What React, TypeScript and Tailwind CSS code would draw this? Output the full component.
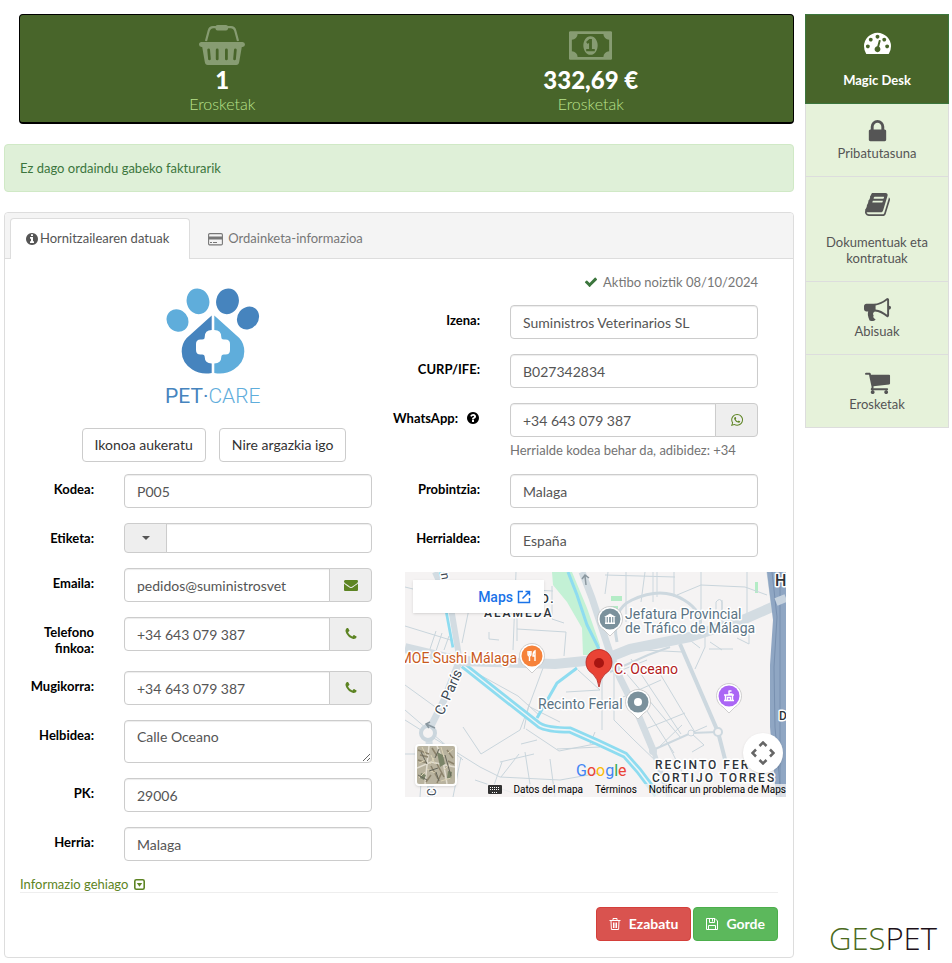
import type { ReactNode } from 'react';
import clsx from 'clsx';

const icons = {
  lock: 'M640 768h512v-192q0-106-75-181t-181-75-181 75-75 181v192zm832 96v576q0 40-28 68t-68 28h-960q-40 0-68-28t-28-68v-576q0-40 28-68t68-28h32v-192q0-184 132-316t316-132 316 132 132 316v192h32q40 0 68 28t28 68z',
  book: 'M1703 478q40 57 18 129l-275 906q-19 64-76.5 107.5t-122.5 43.5h-923q-77 0-148.5-53.5t-99.5-131.5q-24-67-2-127 0-4 3-27t4-37q1-8-3-21.5t-3-19.5q2-11 8-21t16.5-23.5 16.5-23.5q23-38 45-91.5t30-91.5q3-10 .5-30t-.5-28q3-11 17-28t17-23q21-36 42-92t25-90q1-9-2.5-32t.5-28q4-13 22-30.5t22-22.5q19-26 42.5-84.5t27.5-96.5q1-8-3-25.5t-2-26.5q2-8 9-18t18-23 17-21q8-12 16.5-30.5t15-35 16-36 19.5-32 26.5-23.5 36-11.5 47.5 5.5l-1 3q38-9 51-9h761q74 0 114 56t18 130l-274 906q-36 119-71.5 153.5t-128.5 34.5h-869q-27 0-38 15-11 16-1 43 24 70 144 70h923q29 0 56-15.5t35-41.5l300-987q7-22 5-57 38 15 59 43zm-1064 2q-4 13 2 22.5t20 9.5h608q13 0 25.5-9.5t16.5-22.5l21-64q4-13-2-22.5t-20-9.5h-608q-13 0-25.5 9.5t-16.5 22.5zm-83 256q-4 13 2 22.5t20 9.5h608q13 0 25.5-9.5t16.5-22.5l21-64q4-13-2-22.5t-20-9.5h-608q-13 0-25.5 9.5t-16.5 22.5z',
  bullhorn: 'M1664 640q53 0 90.5 37.5t37.5 90.5-37.5 90.5-90.5 37.5v384q0 52-38 90t-90 38q-417-347-812-380-58 19-91 66t-31 100.5 40 92.5q-20 33-23 65.5t6 58 33.5 55 48 50 61.5 50.5q-29 58-111.5 83t-168.5 11.5-132-55.5q-7-23-29.5-87.5t-32-94.5-23-89-15-101 3.5-98.5 22-110.5h-122q-66 0-113-47t-47-113v-192q0-66 47-113t113-47h480q435 0 896-384 52 0 90 38t38 90v384zm-128 604v-954q-394 302-768 343v270q377 42 768 341z',
  cart: 'M704 1536q0 52-38 90t-90 38-90-38-38-90 38-90 90-38 90 38 38 90zm896 0q0 52-38 90t-90 38-90-38-38-90 38-90 90-38 90 38 38 90zm128-1088v512q0 24-16.5 42.5t-40.5 21.5l-1044 122q13 60 13 70 0 16-24 64h920q26 0 45 19t19 45-19 45-45 19h-1024q-26 0-45-19t-19-45q0-11 8-31.5t16-36 21.5-40 15.5-29.5l-177-823h-204q-26 0-45-19t-19-45 19-45 45-19h256q16 0 28.5 6.5t19.5 15.5 13 24.5 8 26 5.5 29.5 4.5 26h1201q26 0 45 19t19 45z',
  envelope: 'M1792 710v794q0 66-47 113t-113 47h-1472q-66 0-113-47t-47-113v-794q44 49 101 87 362 246 497 345 57 42 92.5 65.5t94.5 48 110 24.5h2q51 0 110-24.5t94.5-48 92.5-65.5q170-123 498-345 57-39 100-87zm0-294q0 79-49 151t-122 123q-376 261-468 325-10 7-42.5 31t-54 38.5-52 32.5-57.5 27-50 9h-2q-23 0-50-9t-57.5-27-52-32.5-54-38.5-42.5-31q-91-64-262-182.5t-205-142.5q-62-42-117-115.5t-55-136.5q0-78 41.5-130t118.5-52h1472q65 0 112.5 47t47.5 113z',
  phone: 'M1600 1240q0 27-10 70.5t-21 68.5q-21 50-122 106-94 51-186 51-27 0-53-3.5t-57.5-12.5-47-14.5-55.5-20.5-49-18q-98-35-175-83-127-79-264-216t-216-264q-48-77-83-175-3-9-18-49t-20.5-55.5-14.5-47-12.5-57.5-3.5-53q0-92 51-186 56-101 106-122 25-11 68.5-21t70.5-10q14 0 21 3 18 6 53 76 11 19 30 54t35 63.5 31 53.5q3 4 17.5 25t21.5 35.5 7 28.5q0 20-28.5 50t-62 55-62 53-28.5 46q0 9 5 22.5t8.5 20.5 14 24 11.5 19q76 137 174 235t235 174q2 1 19 11.5t24 14 20.5 8.5 22.5 5q18 0 46-28.5t53-62 55-62 50-28.5q14 0 28.5 7t35.5 21.5 25 17.5q25 15 53.5 31t63.5 35 54 30q70 35 76 53 3 7 3 21z',
  whatsapp: 'M1113 974q13 0 97.5 44t89.5 53q2 5 2 15 0 33-17 76-16 39-71 65.5t-102 26.5q-57 0-190-62-98-45-170-118t-148-185q-72-107-71-194v-8q3-91 74-158 24-22 52-22 6 0 18 1.5t19 1.5q19 0 26.5 6.5t15.5 27.5q8 20 33 88t25 75q0 21-34.5 57.5t-34.5 46.5q0 7 5 15 34 73 102 137 56 53 151 101 12 7 22 7 15 0 54-48.5t52-48.5zm-203 530q127 0 243.5-50t200.5-134 134-200.5 50-243.5-50-243.5-134-200.5-200.5-134-243.5-50-243.5 50-200.5 134-134 200.5-50 243.5q0 203 120 368l-79 233 242-77q158 104 345 104zm0-1382q153 0 292.5 60t240.5 161 161 240.5 60 292.5-60 292.5-161 240.5-240.5 161-292.5 60q-195 0-365-94l-417 134 136-405q-108-178-108-389 0-153 60-292.5t161-240.5 240.5-161 292.5-60z',
  dashboard: 'M384 1152q0-53-37.5-90.5t-90.5-37.5-90.5 37.5-37.5 90.5 37.5 90.5 90.5 37.5 90.5-37.5 37.5-90.5zm192-448q0-53-37.5-90.5t-90.5-37.5-90.5 37.5-37.5 90.5 37.5 90.5 90.5 37.5 90.5-37.5 37.5-90.5zm428 481l101-382q6-26-7.5-48.5t-38.5-29.5-48 6.5-30 39.5l-101 382q-60 5-107 43.5t-63 98.5q-20 77 20 146t117 89 146-20 89-117q16-60-6-117t-72-91zm660-33q0-53-37.5-90.5t-90.5-37.5-90.5 37.5-37.5 90.5 37.5 90.5 90.5 37.5 90.5-37.5 37.5-90.5zm-640-640q0-53-37.5-90.5t-90.5-37.5-90.5 37.5-37.5 90.5 37.5 90.5 90.5 37.5 90.5-37.5 37.5-90.5zm448 192q0-53-37.5-90.5t-90.5-37.5-90.5 37.5-37.5 90.5 37.5 90.5 90.5 37.5 90.5-37.5 37.5-90.5zm320 448q0 261-141 483-19 29-54 29h-1402q-35 0-54-29-141-221-141-483 0-182 71-348t191-286 286-191 348-71 348 71 286 191 191 286 71 348z',
  info: 'M1152 1376v-160q0-14-9-23t-23-9h-96v-512q0-14-9-23t-23-9h-320q-14 0-23 9t-9 23v160q0 14 9 23t23 9h96v320h-96q-14 0-23 9t-9 23v160q0 14 9 23t23 9h448q14 0 23-9t9-23zm-128-896v-160q0-14-9-23t-23-9h-192q-14 0-23 9t-9 23v160q0 14 9 23t23 9h192q14 0 23-9t9-23zm640 416q0 209-103 385.5t-279.5 279.5-385.5 103-385.5-103-279.5-279.5-103-385.5 103-385.5 279.5-279.5 385.5-103 385.5 103 279.5 279.5 103 385.5z',
  question: 'M1024 1376v-192q0-14-9-23t-23-9h-192q-14 0-23 9t-9 23v192q0 14 9 23t23 9h192q14 0 23-9t9-23zm256-672q0-88-55.5-163t-138.5-116-170-41q-243 0-371 213-15 24 8 42l132 100q7 6 19 6 16 0 25-12 53-68 86-92 34-24 86-24 48 0 85.5 26t37.5 59q0 38-20 61t-68 45q-63 28-115.5 86.5t-52.5 125.5v36q0 14 9 23t23 9h192q14 0 23-9t9-23q0-19 21.5-49.5t54.5-49.5q32-18 49-28.5t46-35 44.5-48 28-60.5 12.5-81zm384 192q0 209-103 385.5t-279.5 279.5-385.5 103-385.5-103-279.5-279.5-103-385.5 103-385.5 279.5-279.5 385.5-103 385.5 103 279.5 279.5 103 385.5z',
  check: 'M1671 566q0 40-28 68l-724 724-136 136q-28 28-68 28t-68-28l-136-136-362-362q-28-28-28-68t28-68l136-136q28-28 68-28t68 28l294 295 656-657q28-28 68-28t68 28l136 136q28 28 28 68z',
};

type IconName = keyof typeof icons;

function Icon({ name, className }: { name: IconName; className?: string }) {
  return (
    <svg viewBox="0 0 1792 1792" fill="currentColor" className={clsx('shrink-0', className)} aria-hidden="true">
      <path d={icons[name]} />
    </svg>
  );
}

function BasketIcon() {
  return (
    <svg viewBox="0 0 46 42" className="h-[42px] w-[46px]" fill="currentColor" aria-hidden="true">
      <path d="M7 17 9.800 6.500Q10.800 3.200 14 3.200h18Q35.200 3.200 36.200 6.500L39 17" fill="none" stroke="currentColor" strokeWidth="2.200" />
      <rect x="16.500" y="1" width="12.500" height="5.500" rx="2" />
      <path
        fillRule="evenodd"
        d="M2.500 18h41a2.500 2.500 0 0 1 0 5h-.7l-2.600 15q-.4 3-3 3H8.800q-2.600 0-3-3L3.200 23h-.7a2.500 2.500 0 0 1 0-5zM9.500 24.500a1.300 1.300 0 0 0-1.200 1.500l.8 9a1.300 1.300 0 0 0 2.700 0l-.8-9.200a1.400 1.400 0 0 0-1.500-1.300zM18.200 24.500a1.400 1.400 0 0 0-1.400 1.400v9a1.400 1.400 0 0 0 2.800 0v-9a1.400 1.400 0 0 0-1.400-1.400zM27.400 24.500a1.400 1.400 0 0 0-1.400 1.400v9a1.400 1.400 0 0 0 2.800 0v-9a1.400 1.400 0 0 0-1.400-1.400zM36.500 24.500a1.400 1.400 0 0 0-1.500 1.300l-.8 9.200a1.300 1.300 0 0 0 2.700 0l.8-9a1.300 1.300 0 0 0-1.200-1.500z"
      />
    </svg>
  );
}

function MoneyIcon() {
  return (
    <svg viewBox="0 0 1920 1280" className="h-[29px] w-[43px]" fill="currentColor" aria-hidden="true">
      <path d="M768 896h384v-96h-128v-448h-114l-148 137 77 80q42-37 55-57h2v288h-128v96zm512-256q0 70-21 142t-59.5 134-101.5 101-138 39-138-39-101.5-101-59.500-134-21-142 21-142 59.500-134 101.500-101 138-39 138 39 101.500 101 59.500 134 21 142zm512 256v-512q-106 0-181-75t-75-181h-1152q0 106-75 181t-181 75v512q106 0 181 75t75 181h1152q0-106 75-181t181-75zm128-832v1152q0 26-19 45t-45 19h-1792q-26 0-45-19t-19-45v-1152q0-26 19-45t45-19h1792q26 0 45 19t19 45z" />
    </svg>
  );
}

function CardIcon() {
  return (
    <svg viewBox="0 0 15 13" className="h-[13px] w-[15px]" aria-hidden="true">
      <rect x=".6" y=".6" width="13.800" height="11.300" rx="1.200" fill="none" stroke="currentColor" strokeWidth="1.100" />
      <path d="M.5 3.500h14v3H.5z" fill="currentColor" />
      <path d="M2 9.500h2M5 9.500h4" stroke="currentColor" />
    </svg>
  );
}

function TrashIcon() {
  return (
    <svg viewBox="0 0 12 12" className="size-3" fill="none" stroke="currentColor" aria-hidden="true">
      <path d="M.5 2.500h11M4 2.500v-2h4v2M2 2.500l.4 9h7.200l.4-9M4.500 4.500v5.500M6 4.500v5.500M7.500 4.500v5.500" />
    </svg>
  );
}

function SaveIcon() {
  return (
    <svg viewBox="0 0 12 12" className="size-3" fill="none" stroke="currentColor" aria-hidden="true">
      <path d="M.5.5h8.500l2.500 2.500v8.500H.5zM3.500.5v4h5v-4M6.500 1v2.500M2.500 11.500v-4h7v4" />
    </svg>
  );
}

function PetCareLogo() {
  return (
    <svg viewBox="0 0 100 120" className="h-[120px] w-[100px]" role="img" aria-label="Pet Care">
      <g fill="#5faddb">
        <ellipse cx="13.500" cy="33.500" rx="10.500" ry="11.700" transform="rotate(-38 13.500 33.500)" />
        <ellipse cx="34" cy="14.300" rx="11.300" ry="13" transform="rotate(-15 34 14.300)" />
        <path d="M50.300 28.500V43q7 0 7 7 0 2.500 2.500 2.500h1.700q4.500 0 4.500 4.500v6q0 4.500-4.500 4.500h-1.700q-2.500 0-2.500 2.500 0 6-7 6.500V86q11 2 19.500-3.500 10.500-7 10.500-18 0-8-5-13.500z" />
      </g>
      <g fill="#4684be">
        <ellipse cx="63.500" cy="14.300" rx="11.300" ry="13" transform="rotate(15 63.500 14.300)" />
        <ellipse cx="84" cy="31" rx="10.500" ry="12" transform="rotate(38 84 31)" />
        <path d="M47.700 28.500V43q-7 0-7 7 0 2.500-2.500 2.500h-1.700q-4.500 0-4.500 4.500v6q0 4.500 4.500 4.500h1.700q2.500 0 2.500 2.500 0 6 7 6.500V86q-11 2-19.500-3.500-10.500-7-10.500-18 0-8 5-13.500z" />
      </g>
      <text x="1" y="116" fontFamily="Roboto, sans-serif" fontSize="21" fill="#4684be">
        PET·<tspan fill="#5faddb" fontWeight="300">CARE</tspan>
      </text>
    </svg>
  );
}

const navItems: { label: string; icon: IconName; tall?: boolean }[] = [
  { label: 'Pribatutasuna', icon: 'lock' },
  { label: 'Dokumentuak eta kontratuak', icon: 'book', tall: true },
  { label: 'Abisuak', icon: 'bullhorn' },
  { label: 'Erosketak', icon: 'cart' },
];

function Sidebar() {
  return (
    <aside className="flex w-36 shrink-0 flex-col">
      <nav className="text-center leading-4">
        <a href="#desk" className="flex h-[90px] flex-col items-center border border-[#3c763d] bg-[#48652a] pt-[14px] font-bold text-white">
          <Icon name="dashboard" className="size-[27px]" />
          <span className="mt-4">Magic Desk</span>
        </a>
        {navItems.map((item) => (
          <a
            key={item.label}
            href={`#${item.icon}`}
            className="flex flex-col items-center border-x border-b border-[#ddd] bg-[#e6f2da] px-3 pt-[14px] pb-[15px] text-[#555]"
          >
            <Icon name={item.icon} className="size-[27px]" />
            <span className={clsx(item.tall && 'mt-4')}>{item.label}</span>
          </a>
        ))}
      </nav>
      <div className="mt-auto pr-3 text-right font-['Open_Sans',sans-serif] text-[31px] leading-10 font-light text-[#1c1018]">
        <span className="text-[#4b6a1d]">GES</span>PET
      </div>
    </aside>
  );
}

function Stat({ icon, value }: { icon: ReactNode; value: string }) {
  return (
    <div className="flex flex-1 flex-col items-center">
      <div className="flex h-[42px] items-center text-[#879c72]">{icon}</div>
      <strong className="text-2xl leading-7 font-black text-white">{value}</strong>
      <span className="text-base leading-5 font-light text-[#b9e38a]">Erosketak</span>
    </div>
  );
}

const inputClass =
  'block h-[34px] w-full min-w-0 rounded border border-[#ccc] bg-white px-3 pt-px text-sm text-[#555] shadow-[inset_0_1px_1px_rgba(0,0,0,0.075)] outline-none';

interface FieldProps {
  id: string;
  label: string;
  help?: boolean;
  children: ReactNode;
}

function Field({ id, label, help, children }: FieldProps) {
  return (
    <div className="flex gap-[30px] pr-5">
      <label htmlFor={id} className="flex w-[88px] shrink-0 items-start justify-end pt-[7px] text-right leading-4 font-bold text-black">
        {label}
        {help && <Icon name="question" className="mt-px ml-2 size-[14px]" />}
      </label>
      <div className="min-w-0 flex-1">{children}</div>
    </div>
  );
}

function TextField({ id, label, value }: { id: string; label: string; value: string }) {
  return (
    <Field id={id} label={label}>
      <input id={id} type="text" defaultValue={value} className={inputClass} />
    </Field>
  );
}

function AddonField({ id, label, value, icon, note }: { id: string; label: string; value: string; icon: IconName; note?: string }) {
  return (
    <Field id={id} label={label} help={!!note}>
      <div className="flex">
        <input id={id} type="text" defaultValue={value} className={clsx(inputClass, 'rounded-r-none')} />
        <button type="button" aria-label={label} className="-ml-px flex w-[43px] shrink-0 items-center justify-center rounded-r border border-[#ccc] bg-[#eee] text-[#5d8423]">
          <Icon name={icon} className="size-[14px]" />
        </button>
      </div>
      {note && <p className="mt-[5px] leading-[17px] whitespace-nowrap text-[#737373]">{note}</p>}
    </Field>
  );
}

function Pin({ x, y, color, children }: { x: number; y: number; color: string; children: ReactNode }) {
  return (
    <g transform={`translate(${x} ${y})`}>
      <path d="M0 17-6 11A12.500 12.500 0 1 1 6 11z" fill="#fff" stroke="#bbb" strokeWidth=".7" />
      <circle r="10.500" fill={color} />
      {children}
    </g>
  );
}

function SupplierMap() {
  return (
    <div className="relative -mr-2 ml-[13px] h-[225px] overflow-hidden bg-[#f5f3f3] font-[Roboto,sans-serif]">
      <svg viewBox="0 0 381 225" preserveAspectRatio="xMidYMid slice" className="block size-full" fill="none" role="img" aria-label="Calle Oceano, Malaga">
        <path d="M147 0h20l15 36 13 37-3 10h-14l-1-27-15-26-14-17z" fill="#c3f1d5" />
        <path d="M206 24h11v5h-11zM206 34h7v4h-7zM350 10h3v11h-3z" fill="#b4ecc6" />

        <g stroke="#c9d5dc" strokeWidth="1">
          <path d="M0 15l40 10 72 11v33M111 0l-3 78M0 54l52 16M54 20l24-5 70 4M66 27l-9 44M112 57l49 3-2 24M84 60v7l10 1M31 59l-6 18M37 61l-6 18M44 64l-5 14M147 14v33l12 4" />
          <path d="M138 96l-23 62-39 24-18-27M125 135l30 15M57 93l56 31 22 20M0 113l40 29M0 138l58 50M0 148l75 47 20 10 60 3 40-7M119 157l5-25M116 172l16-4M121 157l33 22 41-8M95 190l34-8M96 205l18-23M85 225l12-35M70 208l50 17M0 182h18l-3 43M56 185l-8 40M120 180l7 45M145 187l5 38M152 177l43-2" />
          <path d="M161 120l34-2M197 96v62M190 160l-5 12M173 98l22 20" />
          <path d="M203 0l-3 22M221 0v50M240 0l-4 30M269 0v25M296 0v50M342 0v42M362 0l5 38M272 23l24-10 44 2 22 8M200 3l70 2M317 28v22M311 44v-14q4-5 6 0v18M304 77h24M305 70l12 8" />
          <path d="M220 100l56 66M226 87l50 75M251 95l40 67M233 125l36 56M212 100l30-12M238 158l42-17M252 177l25-24M218 125l38-17M262 170l20 40M286 161l16-7M286 161l13 12-12 7M238 78l40 2M300 60v15l-10 22M277 62l18 14" />
          <path d="M332 66l12 6v-12l-4-3" />
          <path d="M209 98v50l20 20 26 25 10 32" />
        </g>
        <path d="M212 70q-7-32 15-42 30-14 52 0 20 12 16 30" stroke="#cdd8df" strokeWidth="3" />
        <path d="M248 0v30M252 0v25" stroke="#cdd8df" />
        <path d="M205 100l38-17 22-8" stroke="#cdd8df" strokeWidth="2" />
        <path d="M275 72l38 88 9 35" stroke="#cdd8df" strokeWidth="4" />
        <path d="M248 178l38-17 27-1" stroke="#cdd8df" strokeWidth="2" />

        <g stroke="#8edcf0">
          <path d="M37 0l7 43 6 32M58 93l34 27 42 33q8 5 31 5l27 12 28 13 14 16 18 24" strokeWidth="7" />
          <path d="M172 96l-20 15-20 35M163 0l9 23 10 30 12 24" strokeWidth="3" />
        </g>
        <path d="M37 0l7 43 6 32M58 93l34 27 42 33q8 5 31 5l27 12 28 13 14 16 18 24" stroke="#eef5f7" strokeWidth="1.500" />

        <g stroke="#d3dce2" strokeLinejoin="round">
          <path d="M0 76l55 13 95 3 50-5 25-10 60-12 55-18 34-15" strokeWidth="10" />
          <path d="M30 0l16 36 8 48" strokeWidth="6" />
          <path d="M54 90l-15 38-13 26M24 168l2 57" strokeWidth="7" />
          <path d="M177 0l10 26 18 55 10 25 17 34 16 38" strokeWidth="7" />
          <path d="M248 178l16 47" strokeWidth="5" />
        </g>
        <circle cx="23" cy="161" r="7" fill="#f5f3f3" stroke="#cbd6dd" strokeWidth="4" />
        <circle cx="313" cy="160" r="4" fill="#f5f3f3" stroke="#cdd8df" strokeWidth="2" />
        <circle cx="286" cy="161" r="3" fill="#f5f3f3" stroke="#cdd8df" />
        <circle cx="248" cy="179" r="4" fill="#d3dce2" />
        <path d="M181 13l-1-9M177 7l3-4 4 3M30 156l-9-4M25 150l-4 2 3 4" stroke="#8a979f" strokeWidth="1.500" />

        <path d="M362 0h19v225h-10l-6-70v-62l3-45z" fill="#8fa6c3" />
        <path d="M367 0l5 45-3 50 1 60 6 70M375 0v225" stroke="#7890b0" />
        <path d="M371 30l10-4" stroke="#c7d3df" strokeWidth="8" />

        <g stroke="#fff" strokeWidth="3" paintOrder="stroke" strokeLinejoin="round" fontSize="14">
          <g fill="#2e3338" fontSize="12" fontWeight="500" letterSpacing="2">
            <text x="79" y="45">ALAMEDA</text>
            <text x="136" y="31">D.</text>
            <text x="250" y="197">RECINTO FERIAL</text>
            <text x="247" y="210">CORTIJO TORRES</text>
          </g>
          <text x="370" y="14" fill="#2e3338" fontWeight="500" fontSize="16">H</text>
          <text x="374" y="148" fill="#2e3338" fontWeight="500" fontSize="12">D</text>
          <text transform="translate(38 144) rotate(-66)" fill="#3c4852">C. París</text>
          <text transform="translate(37 8) rotate(80)" textAnchor="end" fill="#3c4852" fontSize="12">n</text>
          <text transform="translate(31 224) rotate(-90)" fill="#3c4852" fontSize="12">C</text>
          <text x="112" y="91" textAnchor="end" fill="#c95a1c">MOE Sushi Málaga</text>
          <g fill="#5b7484">
            <text x="220" y="47">Jefatura Provincial</text>
            <text x="220" y="61">de Tráfico de Málaga</text>
            <text x="133" y="137">Recinto Ferial</text>
          </g>
          <text x="209" y="102" fill="#b3201c">C. Oceano</text>
        </g>

        <Pin x={127} y={84} color="#f6823a">
          <path d="M-4-5v3q0 2 1.500 2V5M-1-5v3q0 2-1.500 2M-2.500-5v4M3 5V-5q-2 1-2 5h2" stroke="#fff" strokeWidth="1.400" />
        </Pin>
        <Pin x={205} y={47} color="#7b919c">
          <path d="M-6-2 0-5.500 6-2zM-5 3.500H5V5H-5z" fill="#fff" />
          <path d="M-4-2v6M-1.500-2v6M1.500-2v6M4-2v6" stroke="#fff" strokeWidth="1.300" />
        </Pin>
        <Pin x={233} y={130} color="#7b919c">
          <circle r="4" fill="#fff" />
        </Pin>
        <Pin x={324} y={124} color="#ab66f5">
          <path d="M-5-1H5M-3.500-1v5M3.500-1v5M-5 4.500H5M0-5.500V-2h3.500M0-5h2.500M-1.500 4V1.500h3V4" stroke="#fff" strokeWidth="1.400" />
        </Pin>
        <path d="M194 115q-1-8-6-13a13 13 0 1 1 12 0q-5 5-6 13z" fill="#e94335" stroke="#b3201c" strokeWidth=".8" />
        <circle cx="194" cy="91" r="5" fill="#a81511" />

        <path d="M82 212h299v13H82z" fill="#f5f3f3" fillOpacity=".75" />
        <rect x="83" y="213" width="14" height="9" rx="1" fill="#333" />
        <path d="M85 215.500h10M85 217.500h10M87 220.500h6" stroke="#fff" strokeDasharray="1 1" />
      </svg>

      <a href="#maps" className="absolute top-2 left-2 flex h-[33px] w-[131px] items-center justify-end gap-1 bg-white pr-[13px] text-sm font-medium text-[#1a73e8] shadow-sm">
        Maps
        <svg viewBox="0 0 14 14" className="size-[14px]" fill="none" stroke="currentColor" strokeWidth="1.500" aria-hidden="true">
          <path d="M6 1.500H1.500v11h11V8M8.500 1.500h4v4M12.500 1.500l-7 7" />
        </svg>
      </a>

      <button type="button" aria-label="Satelitea" className="absolute top-[172px] left-[10px] size-[42px] rounded-sm border-2 border-white bg-[#b9b39f] shadow">
        <svg viewBox="0 0 38 38" className="size-full" fill="none" aria-hidden="true">
          <path d="M20 0l6 15 4 23M0 22l14-6 24 5M12 0l-4 38" stroke="#e2ddd0" strokeWidth="1.500" />
          <path d="M20 6l6 3 2 9-5 3zM4 27l5 2-2 5-4-2zM31 25l4 1-1 7-4-1z" fill="#7b8468" />
          <path d="M1 4l11 4M3 9l8 2M1 14l9 3M15 2l5 8M14 20l7 13M20 18l7 13M30 4l6 8M31 15l6 3M14 29l-5 7M25 26l-5 11" stroke="#8c836c" strokeWidth="1.500" />
          <path d="M5 1l4 8M2 17l7-3M14 9l4 9M10 23l8 4M24 1l3 10M31 7l5-4M24 35l10-3M2 32l6-6M17 12l-4 6M33 18l-6 6" stroke="#dcd3b6" />
          <path d="M4 6l6 12M12 25l9-3M28 9l6 21M19 26l3 9M1 29l9 5M22 3l-4 9" stroke="#66665a" />
        </svg>
      </button>

      <button type="button" aria-label="Mugitu" className="absolute top-[161px] right-[3px] flex size-10 items-center justify-center rounded-full bg-white text-[#666] shadow">
        <svg viewBox="0 0 24 24" className="size-6" fill="none" stroke="currentColor" strokeWidth="2.500" aria-hidden="true">
          <path d="M8.500 5 12 1.500 15.500 5M8.500 19l3.500 3.500L15.500 19M5 8.500 1.500 12 5 15.500M19 8.500l3.500 3.500-3.500 3.500" />
        </svg>
      </button>

      <div className="absolute top-[189px] left-[171px] text-base leading-5 text-[#4285f4]">
        G<span className="text-[#ea4335]">o</span><span className="text-[#fbbc05]">o</span>g<span className="text-[#34a853]">l</span><span className="text-[#ea4335]">e</span>
      </div>
      <div className="absolute right-0 bottom-0 flex gap-3 text-[10px] leading-[14px] whitespace-nowrap text-black">
        <a href="#data">Datos del mapa</a>
        <a href="#terms">Términos</a>
        <a href="#report">Notificar un problema de Maps</a>
      </div>
    </div>
  );
}

const whiteButton = 'h-[34px] rounded border border-[#ccc] bg-white px-3 text-sm text-[#333]';

export default function App() {
  return (
    <div className="flex gap-[11px] bg-white pt-[14px] pr-[3px] pb-1 pl-1 font-[Lato,sans-serif] text-[13px]">
      <main className="min-w-0 flex-1">
        <section className="ml-[15px] flex h-[110px] rounded border border-b-2 border-black bg-[#48652a] px-[18px] pt-[9px]">
          <Stat icon={<BasketIcon />} value="1" />
          <Stat icon={<MoneyIcon />} value="332,69 €" />
        </section>

        <p className="mt-5 flex h-12 items-center rounded border border-[#d0e9c6] bg-[#dff0d8] px-[15px] pt-px text-[#3c763d]">
          Ez dago ordaindu gabeko fakturarik
        </p>

        <section className="mt-5 rounded border border-[#ddd] bg-white">
          <div className="flex h-[46px] items-end rounded-t border-b border-[#ddd] bg-[#f4f4f4] pl-[5px]" role="tablist">
            <button type="button" role="tab" aria-selected="true" className="-mb-px flex h-[41px] items-center gap-px rounded-t border border-b-0 border-[#ddd] bg-white pr-5 pl-[14px] text-[#555]">
              <Icon name="info" className="size-[14px]" />
              Hornitzailearen datuak
            </button>
            <button type="button" role="tab" aria-selected="false" className="flex h-[38px] items-center gap-[5px] px-[18px] text-[#777]">
              <CardIcon />
              Ordainketa-informazioa
            </button>
          </div>

          <form className="pr-[15px] pb-4 pl-px" onSubmit={(e) => e.preventDefault()}>
            <div className="grid grid-cols-2">
              <div className="flex flex-col gap-[15px]">
                <div className="-mb-[3px] flex flex-col items-center pt-7 pl-[30px]">
                  <PetCareLogo />
                  <div className="mt-[21px] flex gap-[13px]">
                    <button type="button" className={whiteButton}>Ikonoa aukeratu</button>
                    <button type="button" className={whiteButton}>Nire argazkia igo</button>
                  </div>
                </div>
                <TextField id="code" label="Kodea:" value="P005" />
                <Field id="tag" label="Etiketa:">
                  <div className="flex h-[30px]">
                    <button type="button" aria-label="Etiketak" className="-mr-px flex w-[43px] shrink-0 items-center justify-center rounded-l border border-[#ccc] bg-[#eee] text-[#555]">
                      <svg viewBox="0 0 8 4" className="h-1 w-2" fill="currentColor" aria-hidden="true">
                        <path d="M0 0h8L4 4z" />
                      </svg>
                    </button>
                    <input id="tag" type="text" className="w-full min-w-0 rounded-r border border-[#ccc] px-3 text-sm text-[#555] shadow-[inset_0_1px_1px_rgba(0,0,0,0.075)] outline-none" />
                  </div>
                </Field>
                <AddonField id="email" label="Emaila:" value="pedidos@suministrosvet" icon="envelope" />
                <AddonField id="phone" label="Telefono finkoa:" value="+34 643 079 387" icon="phone" />
                <AddonField id="mobile" label="Mugikorra:" value="+34 643 079 387" icon="phone" />
                <Field id="address" label="Helbidea:">
                  <textarea id="address" defaultValue="Calle Oceano" className="block h-[43px] w-full resize-y rounded border border-[#ccc] px-3 py-[6px] text-sm leading-5 text-[#555] shadow-[inset_0_1px_1px_rgba(0,0,0,0.075)] outline-none" />
                </Field>
                <TextField id="zip" label="PK:" value="29006" />
                <TextField id="town" label="Herria:" value="Malaga" />
              </div>

              <div className="flex flex-col gap-[15px] pt-[15px]">
                <p className="flex items-center justify-end gap-[5px] pr-5 leading-4 text-[#777]">
                  <Icon name="check" className="size-[14px] text-[#3c763d]" />
                  Aktibo noiztik 08/10/2024
                </p>
                <TextField id="name" label="Izena:" value="Suministros Veterinarios SL" />
                <TextField id="curp" label="CURP/IFE:" value="B027342834" />
                <AddonField id="whatsapp" label="WhatsApp:" value="+34 643 079 387" icon="whatsapp" note="Herrialde kodea behar da, adibidez: +34" />
                <TextField id="province" label="Probintzia:" value="Malaga" />
                <TextField id="country" label="Herrialdea:" value="España" />
                <SupplierMap />
              </div>
            </div>

            <div className="mt-[15px] ml-[14px] flex border-b border-[#eee]">
              <a href="#more" className="flex items-center gap-[6px] leading-4 text-[#5d8423]">
                Informazio gehiago
                <svg viewBox="0 0 11 11" className="size-[11px]" aria-hidden="true">
                  <rect x=".8" y=".8" width="9.400" height="9.400" rx="1.500" fill="none" stroke="currentColor" strokeWidth="1.600" />
                  <path d="M2.800 4h5.400L5.500 7.700z" fill="currentColor" />
                </svg>
              </a>
            </div>
            <div className="mt-[14px] flex justify-end gap-[2px] text-sm font-bold text-white">
              <button type="button" className="flex h-[34px] items-center gap-2 rounded border border-[#d43f3a] bg-[#d9534f] px-3">
                <TrashIcon />
                Ezabatu
              </button>
              <button type="submit" className="flex h-[34px] items-center gap-2 rounded border border-[#4cae4c] bg-[#5cb85c] px-3">
                <SaveIcon />
                Gorde
              </button>
            </div>
          </form>
        </section>
      </main>
      <Sidebar />
    </div>
  );
}
